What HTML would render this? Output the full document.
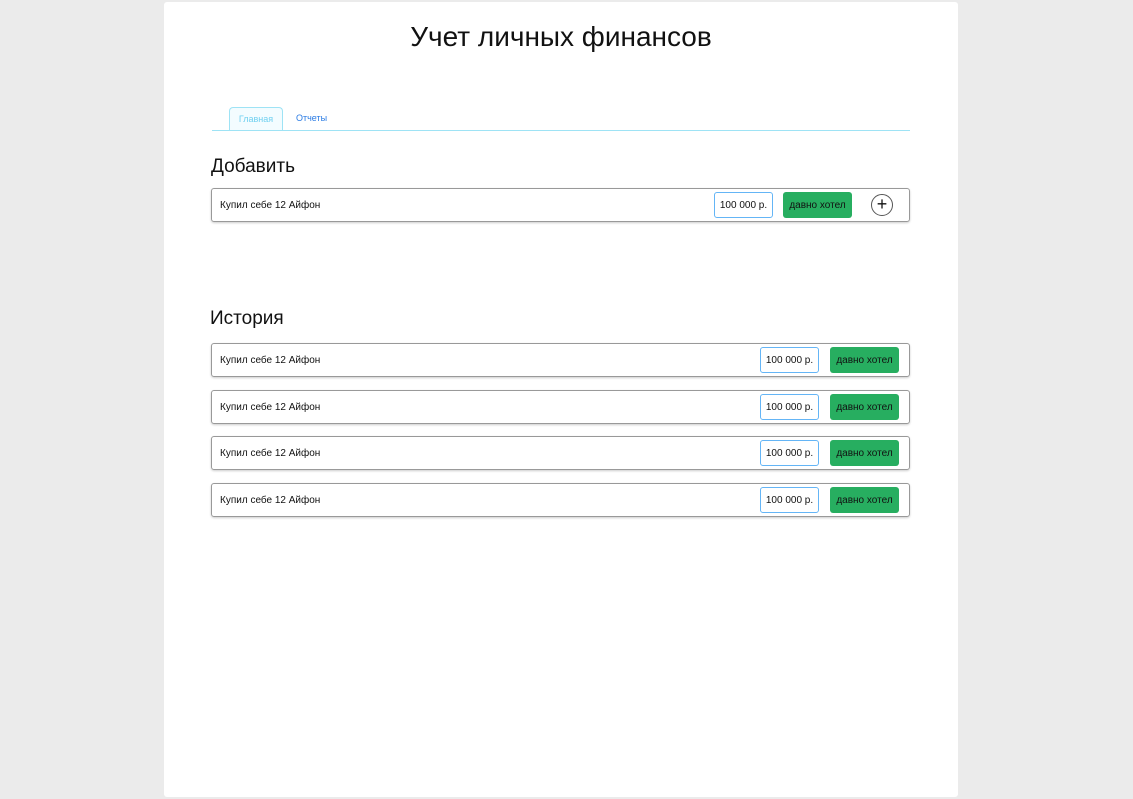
<!DOCTYPE html><html><head><meta charset="utf-8"><style>
body{margin:0;width:1133px;height:799px;background:#ebebeb;font-family:"Liberation Sans","DejaVu Sans",sans-serif;position:relative;overflow:hidden}
.card{position:absolute;left:164px;top:2px;width:794px;height:795px;background:#fff;border-radius:3px}
.a{position:absolute}
h1{position:absolute;left:0;width:794px;top:19px;margin:0;text-align:center;font-weight:400;font-size:28px;color:#111}
.row{position:absolute;left:47px;width:697px;height:32px;border:1px solid #999;border-radius:3px;box-shadow:0 1px 2px rgba(0,0,0,.2)}
.row .t{position:absolute;left:8px;top:11px;font-size:10px;color:#111}
.v{position:absolute;top:3px;width:57px;height:24px;border:1px solid #64b5f6;border-radius:3px;font-size:10px;line-height:26px;text-align:center;color:#111}
.g{position:absolute;top:3px;width:69px;height:26px;background:#27ae60;border-radius:3px;font-size:10px;line-height:28px;text-align:center;color:#111}
</style></head><body>
<div class="card">
<h1>Учет личных финансов</h1>
<div class="a" style="left:65px;top:105px;width:52px;height:23px;border:1px solid #9ee3f5;border-bottom:none;border-radius:4px 4px 0 0;background:#f3fcff;color:#6fd0f0;font-size:9px;text-align:center;line-height:22px">Главная</div>
<div class="a" style="left:132px;top:111px;color:#2a7be4;font-size:9px">Отчеты</div>
<div class="a" style="left:48px;top:128px;width:698px;height:1px;background:#9ee3f5"></div>
<div class="a" style="left:47px;top:154px;font-size:19px;color:#111">Добавить</div>
<div class="row" style="top:186px"><div class="t">Купил себе 12 Айфон</div><div class="v" style="left:502px">100 000 р.</div><div class="g" style="left:571px">давно хотел</div>
<div class="a" style="left:659px;top:5px;width:20px;height:20px;border:1px solid #555;border-radius:50%;text-align:center;line-height:19px;font-size:18px;color:#111">+</div></div>
<div class="a" style="left:46px;top:306px;font-size:19px;color:#111">История</div>
<div class="row" style="top:341px"><div class="t">Купил себе 12 Айфон</div><div class="v" style="left:548px">100 000 р.</div><div class="g" style="left:618px">давно хотел</div></div>
<div class="row" style="top:388px"><div class="t">Купил себе 12 Айфон</div><div class="v" style="left:548px">100 000 р.</div><div class="g" style="left:618px">давно хотел</div></div>
<div class="row" style="top:434px"><div class="t">Купил себе 12 Айфон</div><div class="v" style="left:548px">100 000 р.</div><div class="g" style="left:618px">давно хотел</div></div>
<div class="row" style="top:481px"><div class="t">Купил себе 12 Айфон</div><div class="v" style="left:548px">100 000 р.</div><div class="g" style="left:618px">давно хотел</div></div>
</div>
</body></html>
